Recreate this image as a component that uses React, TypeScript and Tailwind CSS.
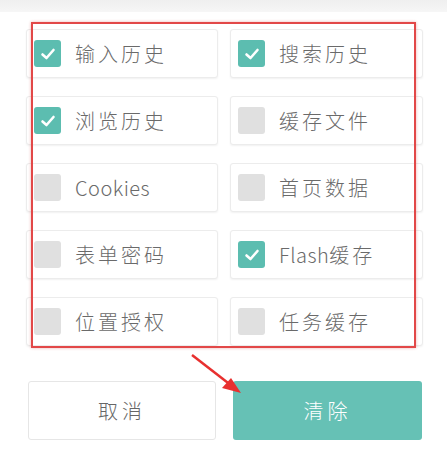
import React from "react";

const items: { label: string; checked: boolean }[] = [
  { label: "输入历史", checked: true },
  { label: "搜索历史", checked: true },
  { label: "浏览历史", checked: true },
  { label: "缓存文件", checked: false },
  { label: "Cookies", checked: false },
  { label: "首页数据", checked: false },
  { label: "表单密码", checked: false },
  { label: "Flash缓存", checked: true },
  { label: "位置授权", checked: false },
  { label: "任务缓存", checked: false },
];

function Box({ checked }: { checked: boolean }) {
  return checked ? (
    <div className="w-[27px] h-[27px] rounded-[3px] bg-[#5cbdb0] flex items-center justify-center shrink-0">
      <svg width="18" height="18" viewBox="0 0 18 18" fill="none">
        <path d="M3.5 9.5 L7.5 13 L14.5 5" stroke="white" strokeWidth="2.6" strokeLinecap="round" strokeLinejoin="round" />
      </svg>
    </div>
  ) : (
    <div className="w-[27px] h-[27px] rounded-[3px] bg-[#e0e0e0] shrink-0" />
  );
}

function Label({ text }: { text: string }) {
  const parts = text.match(/[A-Za-z]+|[^A-Za-z]+/g) || [];
  return (
    <span className="ml-[14px] text-[20px] font-light text-[#6a6a6a] leading-none whitespace-nowrap">
      {parts.map((p, i) =>
        /[A-Za-z]/.test(p) ? (
          <span key={i} className="tracking-[0.5px]">{p}</span>
        ) : (
          <span key={i} className="tracking-[3px]">{p}</span>
        )
      )}
    </span>
  );
}

export default function App() {
  return (
    <div
      className="relative w-[447px] h-[452px] bg-white overflow-hidden"
      style={{ fontFamily: '"Noto Sans CJK SC", "Noto Sans", sans-serif' }}
    >
      <div className="h-3 bg-gradient-to-b from-[#efefef] to-[#f6f6f6]" />
      <div className="pl-[26px] pr-[24px] pt-[17px]">
        <div className="grid grid-cols-[192px_193px] gap-x-[12px] gap-y-[18px]">
          {items.map((it) => (
            <div
              key={it.label}
              className="h-[49px] bg-white border border-[#ececec] rounded-[3px] shadow-[0_1px_2px_rgba(0,0,0,0.06)] flex items-center pl-[7px]"
            >
              <Box checked={it.checked} />
              <Label text={it.label} />
            </div>
          ))}
        </div>
        <div className="mt-[35px] ml-[2px] flex gap-[17px]">
          <div className="w-[188px] h-[59px] border border-[#e6e6e6] rounded-[3px] bg-white flex items-center justify-center text-[20px] font-light tracking-[4px] text-[#666]">
            取消
          </div>
          <div className="w-[189px] h-[59px] rounded-[3px] bg-[#66c1b5] flex items-center justify-center text-[20px] font-light tracking-[4px] text-white">
            清除
          </div>
        </div>
      </div>
      {/* annotation overlay */}
      <div className="absolute left-[31px] top-[22px] w-[385px] h-[326px] border-2 border-[#e24848] shadow-[0_0_3px_rgba(200,0,0,0.3)] pointer-events-none" />
      <svg className="absolute left-0 top-0 pointer-events-none" width="447" height="452">
        <line x1="192" y1="355" x2="232" y2="386" stroke="#e8302f" strokeWidth="2.5" />
        <polygon points="241,393 222,388 231,378" fill="#e8302f" />
      </svg>
    </div>
  );
}
